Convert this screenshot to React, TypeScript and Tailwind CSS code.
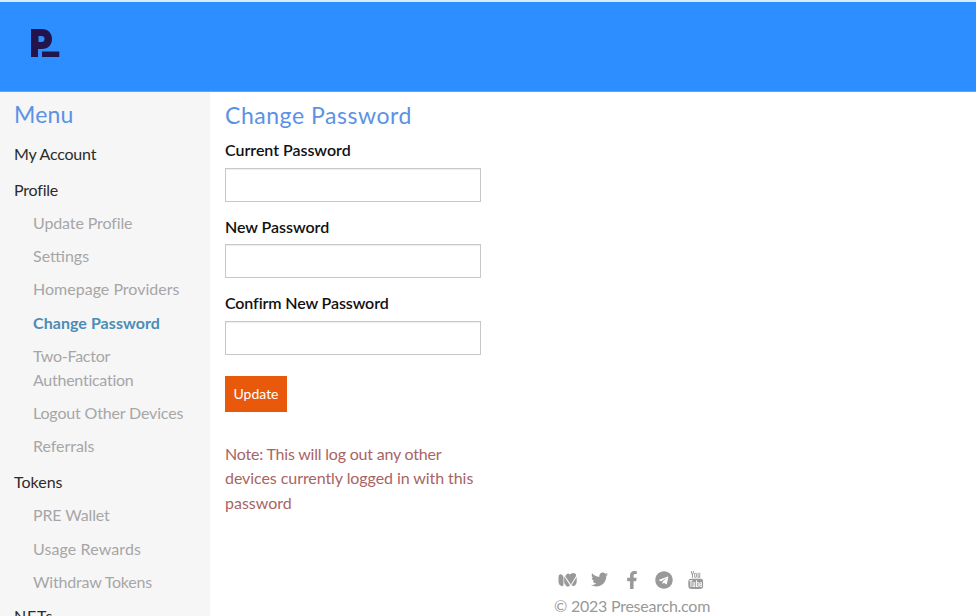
import { FaFacebookF, FaTelegram, FaTwitter } from "react-icons/fa";

type Item = { label: string; fit: string; active?: boolean };

const profileItems: Item[] = [
  { label: "Update Profile", fit: "tracking-[-0.12px]" },
  { label: "Settings", fit: "" },
  { label: "Homepage Providers", fit: "tracking-[0.01px]" },
  { label: "Change Password", fit: "tracking-[0.06px]", active: true },
  { label: "Two-Factor Authentication", fit: "w-[120px] tracking-[-0.26px]" },
  { label: "Logout Other Devices", fit: "tracking-[-0.16px]" },
  { label: "Referrals", fit: "tracking-[-0.04px]" },
];

const tokenItems: Item[] = [
  { label: "PRE Wallet", fit: "tracking-[-0.14px]" },
  { label: "Usage Rewards", fit: "tracking-[0.1px]" },
  { label: "Withdraw Tokens", fit: "tracking-[-0.2px]" },
];

function SubMenu({ items }: { items: Item[] }) {
  return (
    <ul className="pl-[19px]">
      {items.map((item) => (
        <li key={item.label} className="pb-[9.4px] leading-[23.9px]">
          <a
            className={`block ${item.fit} ${item.active ? "font-bold text-[#4a8db5]" : "text-[#a6a6a6]"}`}
          >
            {item.label}
          </a>
        </li>
      ))}
    </ul>
  );
}

function Field({ label, fit }: { label: string; fit: string }) {
  return (
    <label className="block h-[76.4px]">
      <span className={`block h-[29px] font-semibold text-[#111] ${fit}`}>{label}</span>
      <input
        type="password"
        className="block h-[34px] w-[256px] border border-[#c8c8c8] bg-white shadow-[inset_0_1px_1px_rgba(0,0,0,0.07)]"
      />
    </label>
  );
}

function Logo() {
  return (
    <svg width="29" height="29" viewBox="0 0 29 29" fill="#23144c">
      <path fillRule="evenodd" d="M0 0H11C17 0 21 4 21 10C21 16 17 20 11 20H7V28H0ZM7.500 7V13H10.500C12.500 13 13.500 12 13.500 10C13.500 8 12.500 7 10.500 7Z" />
      <path d="M11 22.500H28.300V28H11Z" />
    </svg>
  );
}

function MediumIcon() {
  return (
    <svg width="20" height="16" viewBox="0 0 20 16" fill="currentColor">
      <path d="M.5 5Q.5 1.500 3 2.300Q5.500 3.300 5.500 5V12Q5.500 15 3.500 14Q.5 12.500 .5 9.500Z" />
      <path d="M6.200 4.500L12 13.200Q10.500 15.500 8.500 14.200Q6.200 12.500 6.200 10Z" />
      <path d="M7.200 4.300L8.500 2.500Q10.200 .5 11.700 2.500Q14 .3 16.500 1.200Q18.800 2.300 17.800 4.500L12.900 12.600Z" />
      <path d="M18.700 5V9.500Q18.500 12.500 16.800 13.500Q15 14.500 13.500 13.200Z" />
    </svg>
  );
}

function YoutubeIcon() {
  return (
    <svg width="18" height="18" viewBox="0 0 1792 1792" fill="currentColor">
      <path d="M971 1244v211q0 67-39 67-23 0-45-22v-301q22-22 45-22 39 0 39 67zm338 1v46h-90v-46q0-68 45-68t45 68zm-966-218h107v-94h-312v94h105v569h100v-569zm288 569h89v-494h-89v378q-30 42-57 42-18 0-21-21-1-3-1-35v-364h-89v391q0 49 8 73 12 37 58 37 48 0 102-61v54zm429-148v-197q0-73-9-99-17-56-71-56-50 0-93 54v-217h-89v663h89v-48q45 55 93 55 54 0 71-55 9-27 9-100zm338-10v-13h-91q0 51-2 61-7 36-40 36-46 0-46-69v-87h179v-103q0-79-27-116-39-51-106-51-68 0-107 51-28 37-28 116v173q0 79 29 116 39 51 108 51 72 0 108-53 18-27 21-54 2-9 2-58zm-608-913v-210q0-69-43-69t-43 69v210q0 70 43 70t43-70zm719 751q0 234-26 350-14 59-58 99t-102 46q-184 21-555 21t-555-21q-58-6-102.500-46t-57.500-99q-26-112-26-350 0-234 26-350 14-59 58-99t103-47q183-20 554-20t555 20q58 7 102.500 47t57.500 99q26 112 26 350zm-998-1276h102l-121 399v271h-100v-271q-14-74-61-212-37-103-65-187h106l71 263zm370 333v175q0 81-28 118-38 51-106 51-67 0-105-51-28-38-28-118v-175q0-80 28-117 38-51 105-51 68 0 106 51 28 37 28 117zm335-162v499h-91v-55q-53 62-103 62-46 0-59-37-8-24-8-75v-394h91v367q0 33 1 35 3 22 21 22 27 0 57-43v-381h91z" />
    </svg>
  );
}

export default function App() {
  return (
    <div className="flex h-[616px] w-[976px] flex-col overflow-hidden bg-white font-['Lato',sans-serif] text-base">
      <header className="h-[92px] shrink-0 border-t-2 border-b border-t-[#d3eefb] border-b-[#5aa5fa] bg-[#2d8eff] pt-[27px] pl-[31px]">
        <Logo />
      </header>
      <div className="flex min-h-0 flex-1">
        <nav className="w-[210px] shrink-0 bg-[#f6f6f6] pt-[6px] pl-[14px]">
          <h2 className="h-[43.5px] text-[23px] leading-8 tracking-[0.2px] text-[#5b92e5]">Menu</h2>
          <a className="block h-[36px] leading-6 tracking-[-0.2px] text-[#2b2b2b]">My Account</a>
          <a className="block h-[33.2px] leading-6 tracking-[-0.2px] text-[#2b2b2b]">Profile</a>
          <SubMenu items={profileItems} />
          <a className="mt-[2.5px] block h-[33.2px] leading-6 text-[#2b2b2b]">Tokens</a>
          <SubMenu items={tokenItems} />
          <a className="mt-[1px] block leading-6 tracking-[0.9px] text-[#2b2b2b]">NFTs</a>
        </nav>
        <div className="flex flex-1 flex-col">
          <main className="h-[475px] shrink-0 pt-[7px] pl-[15px]">
            <h1 className="h-[40px] text-[23px] leading-8 tracking-[0.54px] text-[#5b92e5]">Change Password</h1>
            <Field label="Current Password" fit="leading-[22px] tracking-[-0.03px]" />
            <Field label="New Password" fit="leading-6 tracking-[-0.05px]" />
            <Field label="Confirm New Password" fit="leading-[22px] tracking-[-0.12px]" />
            <button className="mt-[8px] block h-[36px] w-[62px] bg-[#e8590c] text-sm text-white">Update</button>
            <p className="mt-[29.8px] leading-[24.4px] text-[#a86464]">
              <span className="block tracking-[-0.2px]">Note: This will log out any other</span>
              <span className="block tracking-[-0.07px]">devices currently logged in with this</span>
              <span className="block">password</span>
            </p>
          </main>
          <footer className="ml-[344px] w-[156px] shrink-0 text-[#999]">
            <div className="flex h-[25px] items-center pl-[4px]">
              <span className="w-[33px]"><MediumIcon /></span>
              <span className="w-[32px]"><FaTwitter size={17} /></span>
              <span className="w-[32px]"><FaFacebookF size={18} /></span>
              <span className="w-[33px]"><FaTelegram size={18} /></span>
              <span><YoutubeIcon /></span>
            </div>
            <p className="leading-[27px] tracking-[-0.24px] whitespace-nowrap">© 2023 Presearch.com</p>
          </footer>
        </div>
      </div>
    </div>
  );
}
